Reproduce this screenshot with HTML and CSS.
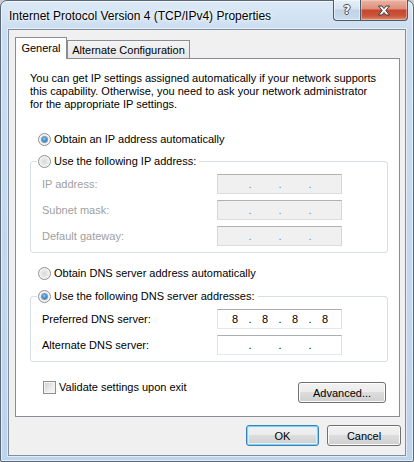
FILE: index.html
```html
<!DOCTYPE html>
<html>
<head>
<meta charset="utf-8">
<title>Internet Protocol Version 4 (TCP/IPv4) Properties</title>
<link rel="stylesheet" href="styles.css">
</head>
<body>
<div class="window">
  <div class="titlebar">
    <div class="title">Internet Protocol Version 4 (TCP/IPv4) Properties</div>
    <div class="caption">
      <div class="cap-btn help"><span class="help-glyph">?</span></div>
      <div class="cap-btn close">
        <svg width="14" height="11" viewBox="0 0 14 11"><path d="M1.5 1H5L7 3.6L9 1H12.5L8.8 5.5L12.5 10H9L7 7.4L5 10H1.5L5.2 5.5Z" fill="#fff" stroke="#3b3b3b" stroke-width="1" stroke-linejoin="round"/></svg>
      </div>
    </div>
  </div>
  <div class="client">
    <div class="tabs">
      <div class="tab active">General</div>
      <div class="tab alt">Alternate Configuration</div>
    </div>
    <div class="panel">
      <p class="intro">You can get IP settings assigned automatically if your network supports<br>this capability. Otherwise, you need to ask your network administrator<br>for the appropriate IP settings.</p>

      <div class="option opt-ip"><span class="radio"><span class="dot"></span></span><span>Obtain an IP address automatically</span></div>

      <fieldset class="group g-ip">
        <legend class="option"><span class="radio"></span><span>Use the following IP address:</span></legend>
        <div class="group-body">
          <span class="label disabled">IP address:</span>
          <div class="ipbox disabled"><span class="oct"></span><span class="sep">.</span><span class="oct"></span><span class="sep">.</span><span class="oct"></span><span class="sep">.</span><span class="oct"></span></div>
          <span class="label disabled">Subnet mask:</span>
          <div class="ipbox disabled"><span class="oct"></span><span class="sep">.</span><span class="oct"></span><span class="sep">.</span><span class="oct"></span><span class="sep">.</span><span class="oct"></span></div>
          <span class="label disabled">Default gateway:</span>
          <div class="ipbox disabled"><span class="oct"></span><span class="sep">.</span><span class="oct"></span><span class="sep">.</span><span class="oct"></span><span class="sep">.</span><span class="oct"></span></div>
        </div>
      </fieldset>

      <div class="option opt-dns"><span class="radio"></span><span>Obtain DNS server address automatically</span></div>

      <fieldset class="group g-dns">
        <legend class="option"><span class="radio"><span class="dot"></span></span><span>Use the following DNS server addresses:</span></legend>
        <div class="group-body">
          <span class="label">Preferred DNS server:</span>
          <div class="ipbox"><span class="oct">8</span><span class="sep">.</span><span class="oct">8</span><span class="sep">.</span><span class="oct">8</span><span class="sep">.</span><span class="oct">8</span></div>
          <span class="label">Alternate DNS server:</span>
          <div class="ipbox"><span class="oct"></span><span class="sep">.</span><span class="oct"></span><span class="sep">.</span><span class="oct"></span><span class="sep">.</span><span class="oct"></span></div>
        </div>
      </fieldset>

      <div class="footer-row">
        <label class="check"><span class="checkbox"></span><span>Validate settings upon exit</span></label>
        <button class="btn adv">Advanced...</button>
      </div>
    </div>
    <div class="buttons">
      <button class="btn ok">OK</button>
      <button class="btn cancel">Cancel</button>
    </div>
  </div>
</div>
</body>
</html>
```

FILE: styles.css
```css
html, body {
  margin: 0;
  padding: 0;
  background: #c9cdd2;
}

body {
  font-family: "Liberation Sans", Arial, sans-serif;
  font-size: 11px;
  color: #000;
}

.window {
  width: 414px;
  height: 462px;
  box-sizing: border-box;
  border: 1px solid #5a6778;
  border-radius: 7px 7px 2px 2px;
  padding: 0 7px 5px 7px;
  background: linear-gradient(180deg, #dce9f6 0px, #cbddf0 30px, #bed4eb 100%);
  box-shadow: inset 0 0 0 1px rgba(255, 255, 255, 0.6);
  display: flex;
  flex-direction: column;
}

.titlebar {
  height: 28px;
  flex: none;
  display: flex;
  align-items: flex-start;
}

.title {
  flex: 1;
  font-size: 12px;
  line-height: 16px;
  margin: 7px 0 0 1px;
  white-space: nowrap;
  text-shadow: 0 0 6px #fff, 0 0 3px #fff;
}

.caption {
  display: flex;
  margin: -1px -2px 0 0;
}

.cap-btn {
  height: 21px;
  box-sizing: border-box;
  border: 1px solid #4f5a68;
  border-top: none;
  display: grid;
  place-items: center;
}

.help {
  width: 27px;
  border-right: none;
  border-radius: 0 0 0 4px;
  background: linear-gradient(180deg, #e6eff8 0%, #d6e3f0 45%, #c0d2e5 50%, #cadbec 100%);
  box-shadow: inset 0 0 0 1px rgba(255, 255, 255, 0.5);
}

.help-glyph {
  font-family: "DejaVu Sans", sans-serif;
  font-weight: bold;
  font-size: 12px;
  line-height: 12px;
  color: #fff;
  text-shadow: 1px 0 #4a4a4a, -1px 0 #4a4a4a, 0 1px #4a4a4a, 0 -1px #4a4a4a;
}

.close {
  width: 48px;
  border-radius: 0 0 4px 0;
  background: linear-gradient(180deg, #eab5a6 0%, #dd8e7a 45%, #c8452d 50%, #c9573d 80%, #dc8e70 100%);
  box-shadow: inset 0 0 0 1px rgba(255, 220, 210, 0.45);
}

.close svg {
  display: block;
}

.client {
  flex: 1;
  border: 1px solid #7f8ea0;
  background: #f0f0f0;
  box-shadow: 0 0 0 1px rgba(255, 255, 255, 0.5);
  display: flex;
  flex-direction: column;
}

.tabs {
  display: flex;
  align-items: flex-end;
  height: 21px;
  margin: 7px 0 0 6px;
}

.tab {
  box-sizing: border-box;
  height: 18px;
  border: 1px solid #898c95;
  border-bottom: none;
  background: linear-gradient(180deg, #f4f4f4 0%, #e6e6e6 100%);
  text-align: center;
  line-height: 14px;
  padding-top: 2px;
  white-space: nowrap;
}

.tab.alt {
  width: 123px;
}

.tab.active {
  width: 52px;
  height: 22px;
  margin-bottom: -1px;
  padding-top: 3px;
  background: #fff;
  position: relative;
  z-index: 1;
}

.panel {
  margin-left: 6px;
  width: 385px;
  height: 359px;
  box-sizing: border-box;
  border: 1px solid #898c95;
  background: #fff;
  display: flex;
  flex-direction: column;
}

.intro {
  margin: 13px 0 0 14px;
  line-height: 13px;
  white-space: nowrap;
}

.option {
  display: flex;
  align-items: center;
  gap: 3px;
  line-height: 14px;
  height: 14px;
  white-space: nowrap;
}

.opt-ip {
  margin: 21px 0 0 22px;
}

.opt-dns {
  margin: 13px 0 0 22px;
}

.radio {
  width: 13px;
  height: 13px;
  box-sizing: border-box;
  border-radius: 50%;
  border: 1px solid #8e8f8f;
  background: radial-gradient(circle at 50% 50%, #d8d8d8 0%, #e9e9e9 45%, #fbfbfb 100%);
  box-shadow: inset 0 0 0 1px #f6f6f6;
  display: grid;
  place-items: center;
  flex: none;
}

.dot {
  width: 5px;
  height: 5px;
  border-radius: 50%;
  background: radial-gradient(circle at 45% 40%, #9fdcff 0%, #3a8fd6 45%, #1b4f8c 100%);
  box-shadow: 0 0 0 1px rgba(40, 90, 150, 0.55);
}

.group {
  margin: 8px 0 0 14px;
  width: 358px;
  min-width: 0;
  box-sizing: border-box;
  padding: 0;
  border: 1px solid #d5dfe5;
  border-radius: 3px;
}

.g-dns {
  margin-top: 9px;
}

.group legend {
  margin-left: 6px;
  padding: 0 3px 0 1px;
}

.group-body {
  display: grid;
  grid-template-columns: 175px 125px;
  row-gap: 6px;
  align-items: center;
  padding: 6px 0 6px 11px;
}

.label {
  white-space: nowrap;
}

.label.disabled {
  color: #a0a0a0;
}

.ipbox {
  height: 20px;
  box-sizing: border-box;
  border: 1px solid;
  border-color: #abadb3 #dbdfe6 #e3e9ef #e2e3ea;
  background: #fff;
  display: flex;
  align-items: center;
  padding-left: 5px;
  line-height: 14px;
}

.ipbox.disabled {
  background: #f0f0f0;
  color: #6f8aa6;
  border-color: #b1b1b1 #d6d6d6 #dddddd #d6d6d6;
}

.oct {
  width: 24px;
  text-align: center;
}

.sep {
  width: 6px;
  text-align: center;
}

.footer-row {
  display: flex;
  align-items: flex-start;
  justify-content: space-between;
  margin: 18px 13px 0 27px;
}

.check {
  display: flex;
  align-items: center;
  gap: 3px;
  line-height: 14px;
  white-space: nowrap;
}

.checkbox {
  width: 13px;
  height: 13px;
  box-sizing: border-box;
  border: 1px solid #8e8f8f;
  background: linear-gradient(135deg, #d0d0d0 0%, #ececec 60%, #f8f8f8 100%);
  box-shadow: inset 0 0 0 1px #f4f4f4;
  flex: none;
}

.btn {
  height: 21px;
  box-sizing: border-box;
  border: 1px solid #707070;
  border-radius: 3px;
  background: linear-gradient(180deg, #f2f2f2 0%, #ebebeb 49%, #dddddd 50%, #cfcfcf 100%);
  box-shadow: inset 0 0 0 1px #fcfcfc;
  font-family: "Liberation Sans", Arial, sans-serif;
  font-size: 11px;
  color: #000;
  padding: 0;
  margin: 0;
}

.btn.adv {
  width: 88px;
  margin-top: 2px;
}

.buttons {
  display: flex;
  justify-content: flex-end;
  gap: 8px;
  margin: 8px 4px 0 0;
}

.btn.ok {
  width: 73px;
  border-color: #3c7fb1;
  box-shadow: inset 0 0 0 1px #7fd4f5, inset 0 0 0 2px #d8f2fc;
}

.btn.cancel {
  width: 74px;
}
```
